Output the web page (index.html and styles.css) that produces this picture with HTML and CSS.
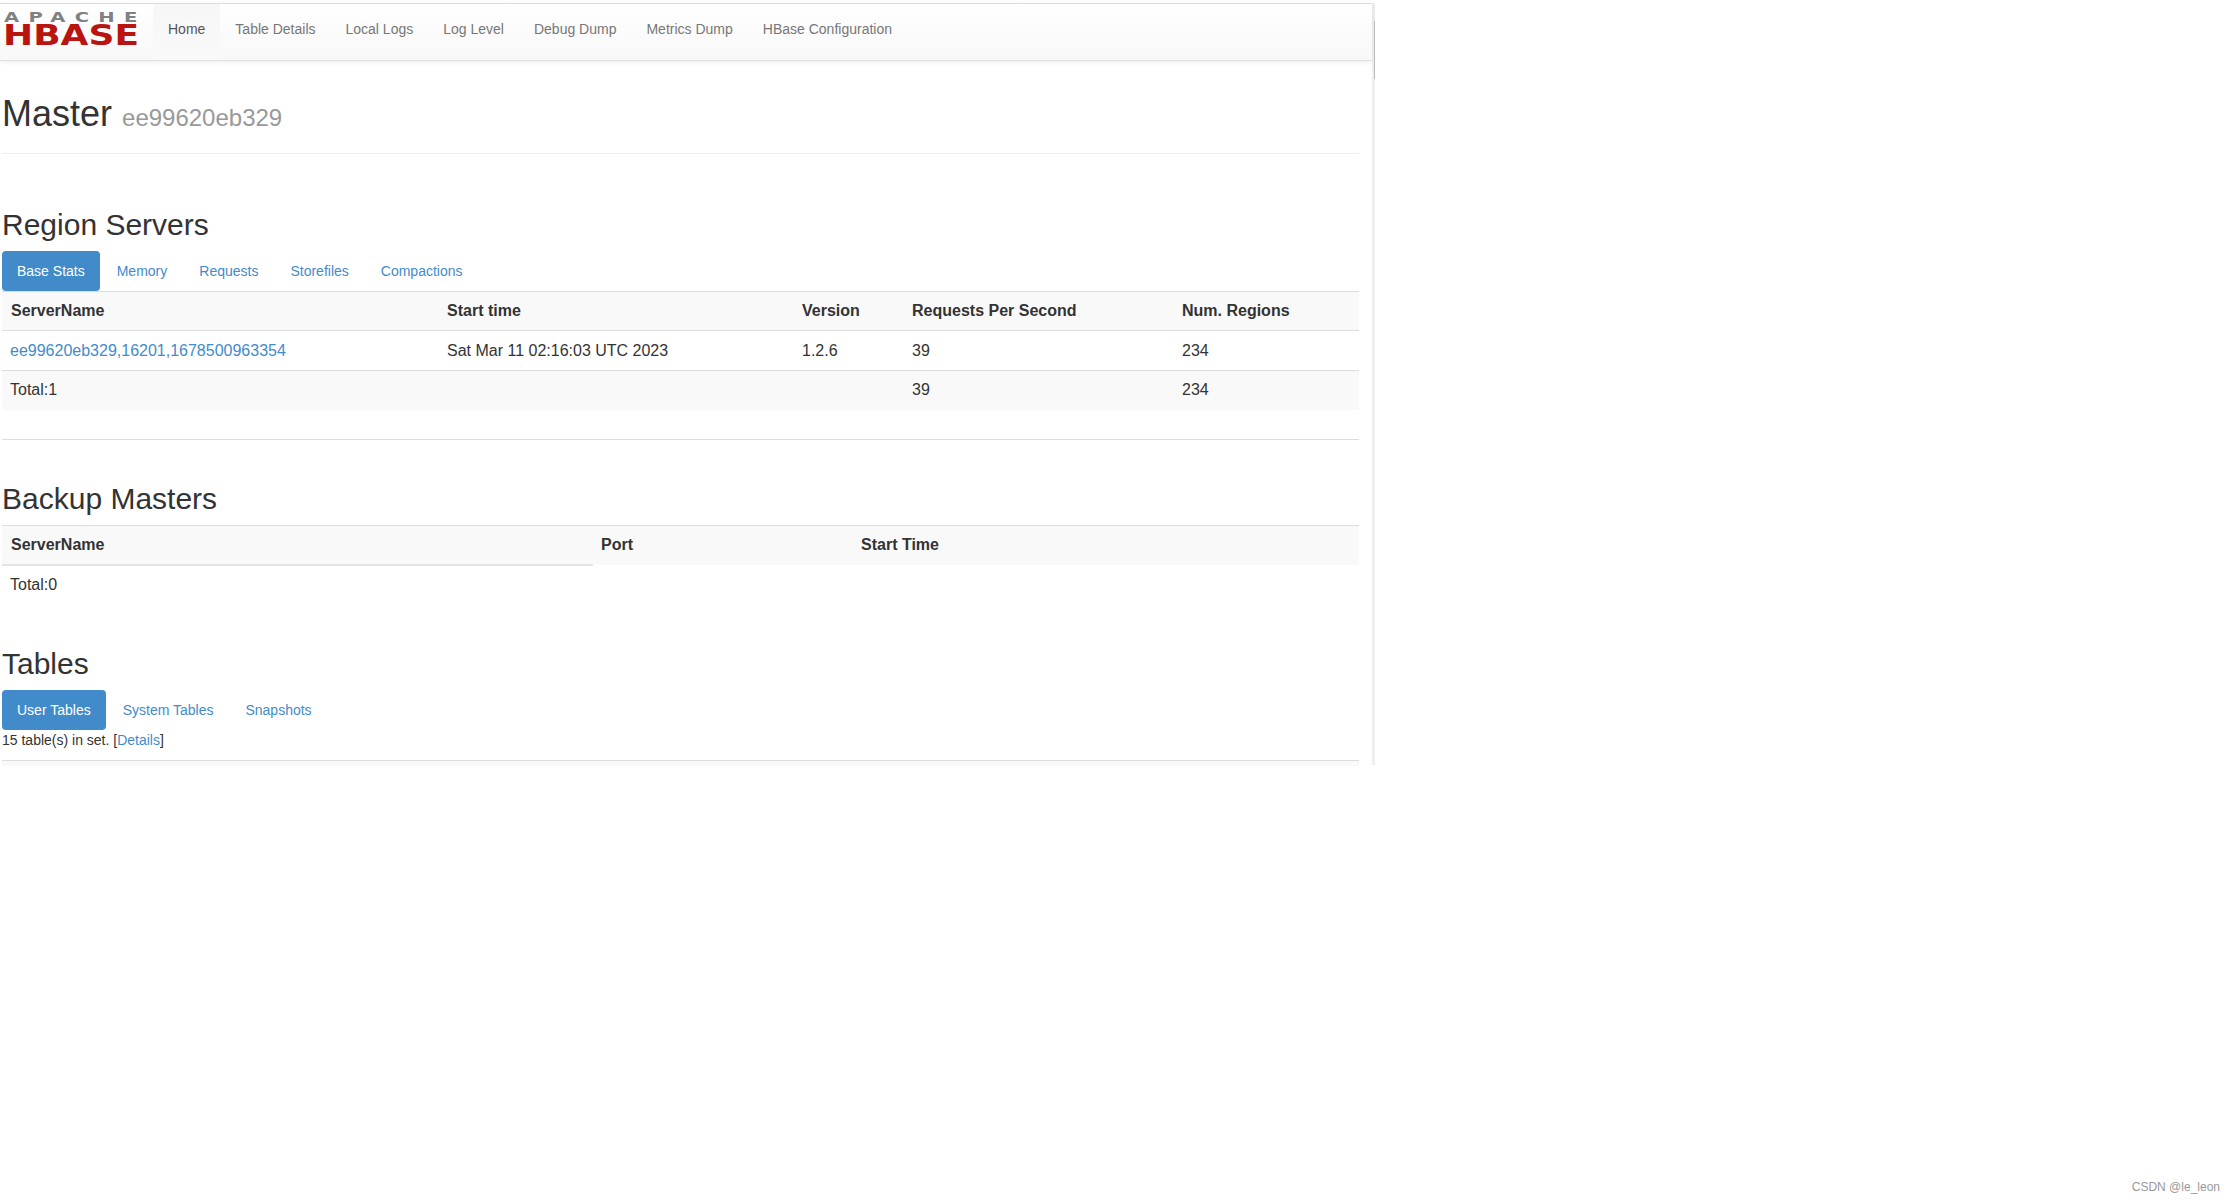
FILE: index.html
```html
<!DOCTYPE html>
<html lang="en">
<head>
<meta charset="utf-8">
<title>Master: ee99620eb329</title>
<link rel="stylesheet" href="styles.css">
</head>
<body>
<div class="page">
  <nav class="navbar">
    <a class="brand" href="#">
      <svg class="logo" width="134" height="36" viewBox="0 0 134 36">
        <text class="logo-apache" transform="scale(1.45 1)" x="0" y="10" textLength="92" lengthAdjust="spacing">APACHE</text>
        <text class="logo-hbase" x="-1" y="33" textLength="136" lengthAdjust="spacingAndGlyphs">HBASE</text>
      </svg>
    </a>
    <ul class="nav">
      <li class="nav-item active"><a href="#">Home</a></li>
      <li class="nav-item"><a href="#">Table Details</a></li>
      <li class="nav-item"><a href="#">Local Logs</a></li>
      <li class="nav-item"><a href="#">Log Level</a></li>
      <li class="nav-item"><a href="#">Debug Dump</a></li>
      <li class="nav-item"><a href="#">Metrics Dump</a></li>
      <li class="nav-item"><a href="#">HBase Configuration</a></li>
    </ul>
  </nav>

  <main class="container">
    <header class="page-header">
      <h1>Master <small>ee99620eb329</small></h1>
    </header>

    <section class="region-servers">
      <h2>Region Servers</h2>
      <ul class="pills">
        <li class="pill active"><a href="#">Base Stats</a></li>
        <li class="pill"><a href="#">Memory</a></li>
        <li class="pill"><a href="#">Requests</a></li>
        <li class="pill"><a href="#">Storefiles</a></li>
        <li class="pill"><a href="#">Compactions</a></li>
      </ul>
      <table class="table stats">
        <colgroup><col class="c1"><col class="c2"><col class="c3"><col class="c4"><col class="c5"></colgroup>
        <thead>
          <tr><th>ServerName</th><th>Start time</th><th>Version</th><th>Requests Per Second</th><th>Num. Regions</th></tr>
        </thead>
        <tbody>
          <tr><td><a href="#">ee99620eb329,16201,1678500963354</a></td><td>Sat Mar 11 02:16:03 UTC 2023</td><td>1.2.6</td><td>39</td><td>234</td></tr>
          <tr class="shaded"><td>Total:1</td><td></td><td></td><td>39</td><td>234</td></tr>
        </tbody>
      </table>
    </section>

    <hr class="divider">

    <section class="backup">
      <h2>Backup Masters</h2>
      <table class="table masters">
        <colgroup><col class="m1"><col class="m2"><col class="m3"></colgroup>
        <thead>
          <tr><th class="underlined">ServerName</th><th>Port</th><th>Start Time</th></tr>
        </thead>
        <tbody>
          <tr class="plain"><td>Total:0</td><td></td><td></td></tr>
        </tbody>
      </table>
    </section>

    <section class="tables">
      <h2>Tables</h2>
      <ul class="pills">
        <li class="pill active"><a href="#">User Tables</a></li>
        <li class="pill"><a href="#">System Tables</a></li>
        <li class="pill"><a href="#">Snapshots</a></li>
      </ul>
      <p class="count">15 table(s) in set. [<a href="#">Details</a>]</p>
      <div class="cut-row"></div>
    </section>
  </main>
  <div class="scroll-thumb"></div>
</div>
<footer class="watermark">CSDN @le_leon</footer>
</body>
</html>
```

FILE: styles.css
```css
* { box-sizing: border-box; }

html, body { margin: 0; padding: 0; background: #fff; }

body {
  font-family: "Liberation Sans", Arial, sans-serif;
  font-size: 14px;
  line-height: 20px;
  color: #333;
  height: 1202px;
  overflow: hidden;
}

a { color: #428bca; text-decoration: none; }
ul { list-style: none; margin: 0; padding: 0; }

.page {
  position: relative;
  width: 1375px;
  margin-top: 3px;
  height: 762px;
  border-right: 3px solid #eee;
}

.scroll-thumb {
  position: absolute;
  top: 18px;
  right: -3px;
  width: 1px;
  height: 58px;
  background: #bbb;
}

.navbar {
  display: flex;
  height: 58px;
  border-top: 1px solid #ddd;
  border-bottom: 1px solid #e0e0e0;
  background: linear-gradient(to bottom, #fff 0%, #f8f8f8 100%);
  box-shadow: 0 1px 5px rgba(0, 0, 0, .08);
}

.brand {
  display: block;
  width: 153px;
  padding: 8px 0 0 4px;
}

.logo { display: block; overflow: visible; }

.logo-apache {
  font-family: "DejaVu Sans", sans-serif;
  font-size: 13.5px;
  font-weight: 700;
  fill: #808184;
}

.logo-hbase {
  font-family: "DejaVu Sans", sans-serif;
  font-size: 29px;
  font-weight: 700;
  fill: #b9140f;
}

.nav { display: flex; }

.nav-item a {
  display: block;
  padding: 15px;
  height: 56px;
  color: #777;
}

.nav-item.active a {
  color: #555;
  background: linear-gradient(to bottom, #f7f7f7, #f9f9f9);
}

.container {
  width: 1359px;
  padding-left: 2px;
}

h1, h2 { margin: 0; font-weight: 400; color: #333; line-height: 1.1; }

.page-header {
  height: 93px;
  padding-top: 33px;
  border-bottom: 1px solid #eee;
}

h1 { font-size: 36px; }
h1 small { font-size: 24px; color: #999; font-weight: 400; line-height: 1; }
h2 { font-size: 30px; }

.region-servers { padding-top: 54px; }
.region-servers h2 { margin-bottom: 10px; }

.pills { display: flex; gap: 2px; }

.pill a {
  display: block;
  height: 40px;
  padding: 10px 15px;
  border-radius: 4px;
}

.pill.active a { background: #428bca; color: #fff; }

.table {
  width: 100%;
  border-collapse: collapse;
  table-layout: fixed;
  font-size: 16px;
}

.table th, .table td {
  height: 40px;
  padding: 8px;
  text-align: left;
  vertical-align: middle;
  border-top: 1px solid #ddd;
}

.table thead th { background: #f9f9f9; font-weight: 700; }
.table thead th:first-child { padding-left: 9px; }
.shaded td { background: #f9f9f9; }

.stats thead th { height: 39px; }
.stats .shaded td { height: 39px; }

.c1 { width: 437px; }
.c2 { width: 355px; }
.c3 { width: 110px; }
.c4 { width: 270px; }

.m1 { width: 591px; }
.m2 { width: 260px; }

.table .underlined { border-bottom: 2px solid #e4e4e4; }

.divider {
  margin: 29px 0 0;
  border: 0;
  border-top: 1px solid #ddd;
}

.backup { padding-top: 42px; }
.backup h2 { margin-bottom: 10px; }

.table .plain td { border-top: 0; height: 39px; }

.tables { padding-top: 43px; }
.tables h2 { margin-bottom: 10px; }

.count {
  margin: 0;
  font-size: 14px;
  line-height: 20px;
}

.cut-row {
  height: 6px;
  margin-top: 10px;
  border-top: 1px solid #ddd;
  background: #f9f9f9;
}

.watermark {
  position: absolute;
  top: 1179px;
  right: 16px;
  font-size: 12px;
  line-height: 16px;
  color: #999;
}
```
